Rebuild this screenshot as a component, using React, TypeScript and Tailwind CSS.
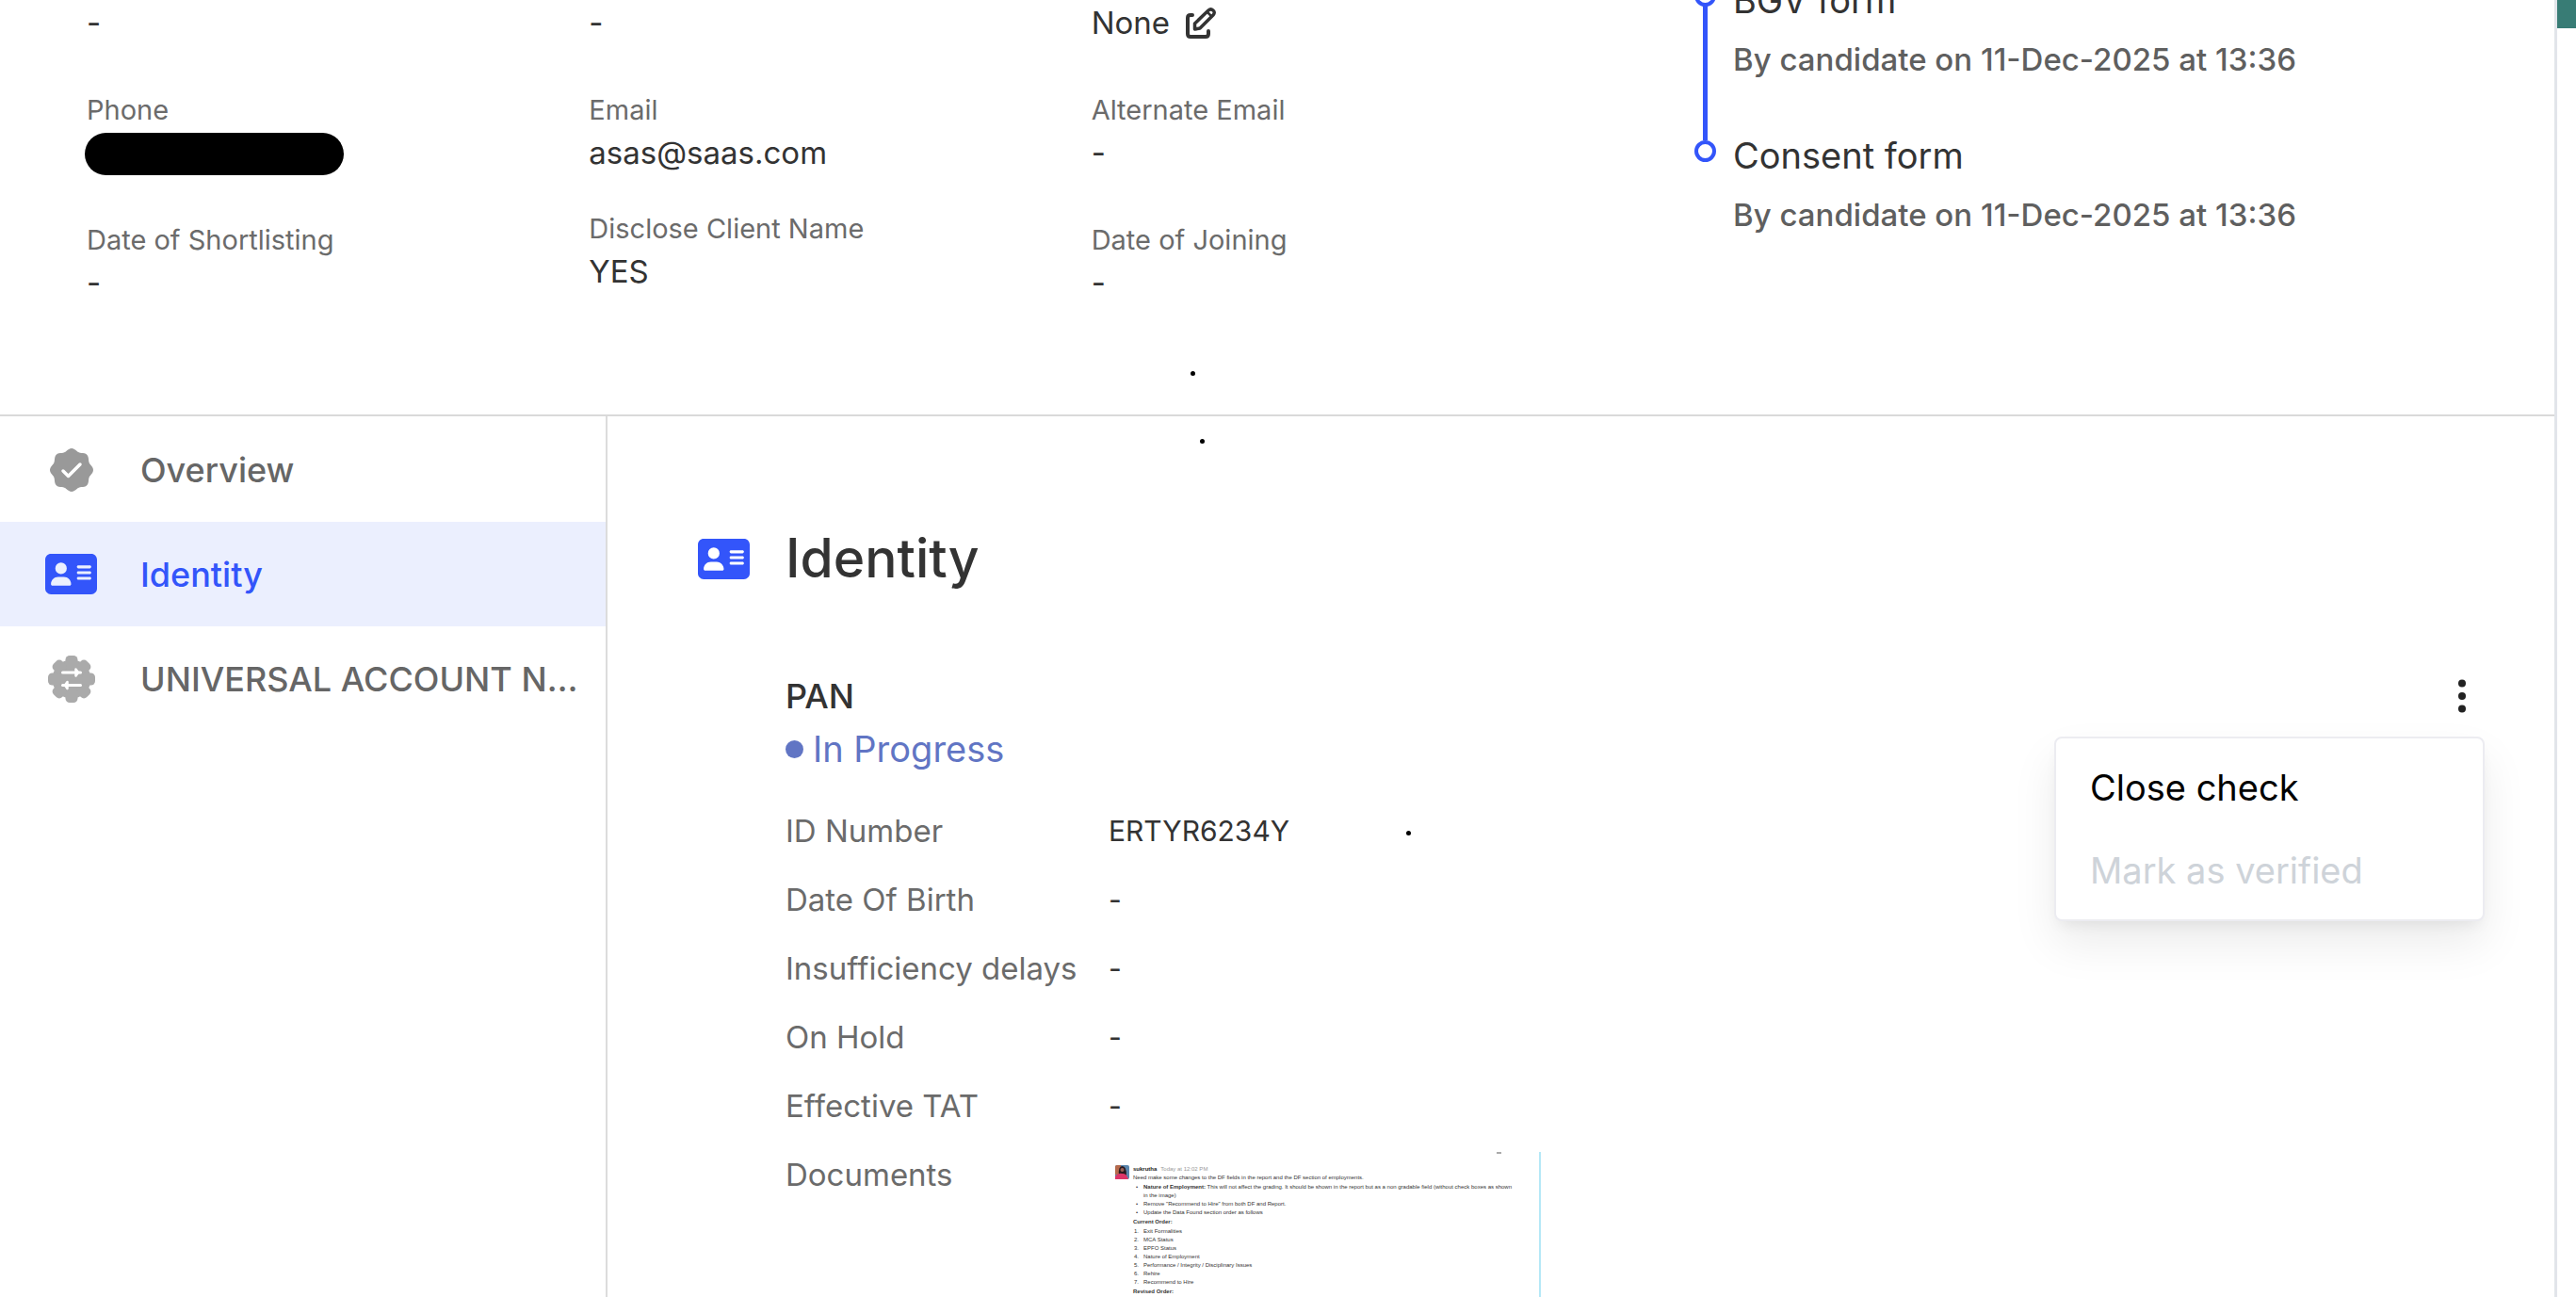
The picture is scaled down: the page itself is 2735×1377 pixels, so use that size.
import React from "react";
import { FaAddressCard } from "react-icons/fa6";

interface Field {
  label?: string;
  value: React.ReactNode;
  spacing?: string;
}

const redactedPhone = (
  <span className="flex h-12 items-end">
    <span className="-ml-0.5 h-[45px] w-[275px] rounded-full bg-black" />
  </span>
);

const fieldColumns: Field[][] = [
  [{ value: "-" }, { label: "Phone", value: redactedPhone }, { label: "Date of Shortlisting", value: "-" }],
  [
    { value: "-" },
    { label: "Email", value: "asas@saas.com" },
    { label: "Disclose Client Name", value: "YES", spacing: "mt-9" },
  ],
  [
    {
      value: (
        <span className="flex items-center gap-4">
          None
          <button type="button" aria-label="Edit">
            <EditIcon />
          </button>
        </span>
      ),
    },
    { label: "Alternate Email", value: "-" },
    { label: "Date of Joining", value: "-" },
  ],
];

const timeline = [
  { title: "BGV form", detail: "By candidate on 11-Dec-2025 at 13:36" },
  { title: "Consent form", detail: "By candidate on 11-Dec-2025 at 13:36" },
];

const details = [
  { label: "ID Number", value: "ERTYR6234Y" },
  { label: "Date Of Birth", value: "-" },
  { label: "Insufficiency delays", value: "-" },
  { label: "On Hold", value: "-" },
  { label: "Effective TAT", value: "-" },
];

const currentOrder = [
  "Exit Formalities",
  "MCA Status",
  "EPFO Status",
  "Nature of Employment",
  "Performance / Integrity / Disciplinary Issues",
  "Rehire",
  "Recommend to Hire",
];

function EditIcon() {
  return (
    <svg
      viewBox="0 0 34 34"
      className="size-[34px]"
      fill="none"
      stroke="#333"
      strokeWidth="4"
      strokeLinecap="round"
      strokeLinejoin="round"
    >
      <path d="M8 9H6Q3 9 3 12V29Q3 32 6 32H22Q25 32 25 29V26" />
      <path d="M10.500 24V18L25 4Q27.500 1.800 30 4T30 9L16 23Z" strokeWidth="3.500" />
      <path d="M24 6L28 10" strokeWidth="2.500" />
    </svg>
  );
}

// Scalloped badge outline with eight soft bumps
const scallop = Array.from({ length: 96 }, (_, i) => {
  const a = (i / 96) * Math.PI * 2;
  const r = 21.6 + 1.4 * Math.cos(8 * a);
  return `${(24 + r * Math.sin(a)).toFixed(2)},${(24 - r * Math.cos(a)).toFixed(2)}`;
}).join(" ");

function BadgeCheckIcon() {
  return (
    <svg viewBox="0 0 48 48" className="size-12">
      <polygon points={scallop} fill="#999" />
      <path
        d="M15 25L20.500 30.500L33 18"
        fill="none"
        stroke="#fff"
        strokeWidth="3.500"
        strokeLinecap="round"
        strokeLinejoin="round"
      />
    </svg>
  );
}

function GearArrowsIcon() {
  return (
    <svg viewBox="0 0 50 50" className="size-[50px]">
      <circle cx="25" cy="25" r="20.500" fill="#aaa" />
      {[0, 45, 90, 135, 180, 225, 270, 315].map((deg) => (
        <rect key={deg} x="18.500" y="0" width="13" height="14" rx="4.500" fill="#aaa" transform={`rotate(${deg} 25 25)`} />
      ))}
      <g fill="#fff" stroke="#fff" strokeLinecap="round" strokeLinejoin="round">
        <path d="M15.500 18H34.500M34.500 31.500H15.500" strokeWidth="3" fill="none" />
        <path d="M29.500 14.500L32 18L29.500 21.500ZM20.500 28L18 31.500L20.500 35Z" strokeWidth="2.500" />
      </g>
    </svg>
  );
}

function KebabIcon() {
  return (
    <svg viewBox="0 0 8 36" className="h-9 w-2" fill="#222">
      <circle cx="4" cy="4.500" r="4" />
      <circle cx="4" cy="18" r="4" />
      <circle cx="4" cy="31.500" r="4" />
    </svg>
  );
}

const Speck = ({ className }: { className: string }) => (
  <span className={`absolute size-[5px] rounded-full bg-black ${className}`} />
);

function CandidateSummary() {
  return (
    <header className="relative flex h-[442px] overflow-hidden border-b-2 border-[#d9d9d9] pl-[92px]">
      <div className="grid w-[1600px] shrink-0 grid-cols-3">
        {fieldColumns.map((fields, col) => (
          <dl key={col}>
            {fields.map((field, i) => (
              <div key={i} className={field.label ? field.spacing ?? "mt-12" : ""}>
                {field.label && <dt className="text-[29px] leading-[42px] text-[#6b6b6b]">{field.label}</dt>}
                <dd className="text-[33px] leading-[48px] text-[#333]">{field.value}</dd>
              </div>
            ))}
          </dl>
        ))}
      </div>
      <ol className="-mt-[27px] ml-[107px] min-w-0 flex-1">
        {timeline.map((step, i) => (
          <li key={step.title} className="flex h-[165px] gap-[18px]">
            <div className="flex shrink-0 flex-col items-center pt-[11px]">
              <span className="size-[23px] shrink-0 rounded-full border-4 border-[#3355fa] bg-white" />
              {i < timeline.length - 1 && <span className="-mb-[11px] w-[5px] flex-1 bg-[#3355fa]" />}
            </div>
            <div>
              <h3 className="text-[38px] leading-[54px] text-[#333]">{step.title}</h3>
              <p className="mt-3 text-[33px] leading-[48px] font-medium text-[#5f5f5f]">{step.detail}</p>
            </div>
          </li>
        ))}
      </ol>
      <Speck className="top-[394px] left-[1264px]" />
    </header>
  );
}

function Sidebar() {
  const items = [
    { label: "Overview", icon: <BadgeCheckIcon /> },
    { label: "Identity", icon: <FaAddressCard className="size-[55px]" />, active: true },
    { label: "UNIVERSAL ACCOUNT NUMBER", icon: <GearArrowsIcon /> },
  ];

  return (
    <nav className="w-[645px] shrink-0 border-r-2 border-[#dcdcdc] pt-px">
      {items.map((item) => (
        <button
          key={item.label}
          type="button"
          className={`flex h-[111px] w-full items-center pr-5 pl-12 text-left text-[36px] leading-[54px] font-medium ${
            item.active ? "bg-[#ebeffe] text-[#3355fa]" : "text-[#666]"
          }`}
        >
          <span className="flex w-[55px] shrink-0 justify-center">{item.icon}</span>
          <span className="ml-[46px] min-w-0 truncate">{item.label}</span>
        </button>
      ))}
    </nav>
  );
}

function DocumentPreview() {
  return (
    <article className="h-[240px] w-[459px] border-r-2 border-[#b5e8f7] pl-[7px] font-['Liberation_Sans'] text-[6px] leading-[9px] whitespace-nowrap text-[#333]">
      <div className="flex h-3.5 justify-end pr-10">
        <span className="h-0.5 w-[5px] bg-[#aaa]" />
      </div>
      <div className="flex gap-1">
        <svg viewBox="0 0 15 15" className="size-[15px] shrink-0">
          <rect width="15" height="15" rx="2" fill="#5a86ad" />
          <path d="M0 2Q0 0 2 0H6V10H0Z" fill="#b66a4c" />
          <path d="M4 11Q3 1 7.500 1T12 11Z" fill="#2a1b20" />
          <circle cx="7.500" cy="5" r="2" fill="#9a6255" />
          <path d="M0 15V12Q3 8 7.500 9Q12 8 14 15Z" fill="#dc3568" />
        </svg>
        <div className="min-w-0 flex-1">
          <p className="flex h-[9px] gap-1 text-[#999]">
            <b className="text-[#222]">sukrutha</b>
            <span>Today at 12:02 PM</span>
          </p>
          <p>Need make some changes to the DF fields in the report and the DF section of employments.</p>
          <ul className="mt-px">
            <li className="flex">
              <span className="w-[11px] shrink-0 pl-[3px]">•</span>
              <span>
                <b>Nature of Employment:</b> This will not affect the grading. It should be shown in the report but as a
                non gradable field (without check boxes as shown
                <br />
                in the image)
              </span>
            </li>
            <li className="flex">
              <span className="w-[11px] shrink-0 pl-[3px]">•</span>Remove "Recommend to Hire" from both DF and Report.
            </li>
            <li className="flex">
              <span className="w-[11px] shrink-0 pl-[3px]">•</span>Update the Data Found section order as follows
            </li>
          </ul>
          <p className="mt-px font-bold">Current Order:</p>
          <ol className="my-px">
            {currentOrder.map((entry, i) => (
              <li key={entry} className="flex">
                <span className="w-[11px] shrink-0 pl-px">{i + 1}.</span>
                {entry}
              </li>
            ))}
          </ol>
          <p className="font-bold">Revised Order:</p>
        </div>
      </div>
    </article>
  );
}

function CheckMenu() {
  return (
    <div className="relative self-start">
      <button type="button" aria-label="More actions" className="flex h-[54px] w-12 items-center justify-center">
        <KebabIcon />
      </button>
      <div className="absolute top-full right-0 mt-4 w-[457px] rounded-lg border-2 border-[#ececf1] bg-white py-2 text-[38px] shadow-[0_24px_48px_rgba(0,0,0,0.08),0_8px_16px_-6px_rgba(0,0,0,0.08)]">
        <button type="button" className="block h-[88px] w-full px-9 text-left text-black">
          Close check
        </button>
        <button type="button" disabled className="block h-[88px] w-full px-9 text-left text-[#ced3d9]">
          Mark as verified
        </button>
      </div>
    </div>
  );
}

function IdentitySection() {
  return (
    <section className="relative min-w-0 flex-1 pt-[111px] pr-[74px] pl-24">
      <Speck className="top-6 left-[629px]" />
      <div className="flex items-center gap-[38px]">
        <FaAddressCard className="size-[55px] text-[#3355fa]" />
        <h1 className="text-[57px] leading-[80px] font-medium text-[#333]">Identity</h1>
      </div>
      <div className="mt-[79px] pl-[93px]">
        <div className="flex justify-between">
          <div>
            <h2 className="text-[36px] leading-[54px] font-medium text-[#333]">PAN</h2>
            <p className="mt-0.5 flex items-center gap-2.5 text-[38px] leading-[54px] text-[#6175c4]">
              <span className="size-[19px] rounded-full bg-[#6175c4]" />
              In Progress
            </p>
          </div>
          <CheckMenu />
        </div>
        <dl className="mt-9 grid grid-cols-[343px_1fr] gap-y-[25px] leading-[48px]">
          {details.map((row) => (
            <React.Fragment key={row.label}>
              <dt className="text-[33px] text-[#6b6b6b]">{row.label}</dt>
              <dd className="text-[30px] text-[#333]">{row.value}</dd>
            </React.Fragment>
          ))}
          <dt className="text-[33px] text-[#6b6b6b]">Documents</dt>
          <dd>
            <DocumentPreview />
          </dd>
        </dl>
      </div>
      <Speck className="top-[440px] left-[848px]" />
    </section>
  );
}

export default function App() {
  return (
    <div className="flex h-screen overflow-hidden bg-white font-['Inter',sans-serif]">
      <main className="flex min-w-0 flex-1 flex-col border-r-[3px] border-[#e2e5ea]">
        <CandidateSummary />
        <div className="flex min-h-0 flex-1">
          <Sidebar />
          <IdentitySection />
        </div>
      </main>
      <aside className="w-5 shrink-0">
        <div className="h-[30px] bg-[#387c75]" />
      </aside>
    </div>
  );
}
